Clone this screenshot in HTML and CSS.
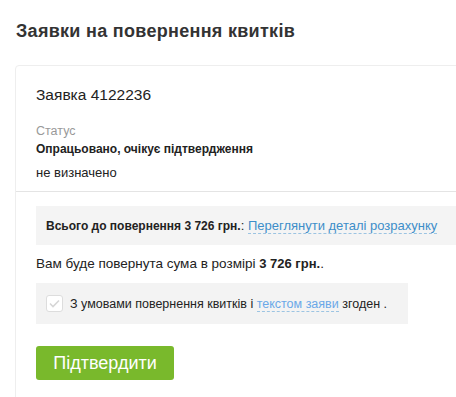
FILE: index.html
```html
<!DOCTYPE html>
<html lang="uk">
<head>
    <meta charset="UTF-8">
    <meta name="viewport" content="width=device-width, initial-scale=1.0">
    <title>Заявки на повернення квитків</title>
    <link rel="stylesheet" href="styles.css">
</head>
<body>
    <h1 class="pageTitle">Заявки на повернення квитків</h1>
    <div class="card">
        <div class="cardHead">
            <h2 class="orderTitle">Заявка 4122236</h2>
            <div class="statusLabel">Статус</div>
            <div class="statusValue">Опрацьовано, очікує підтвердження</div>
            <div class="statusNote">не визначено</div>
        </div>
        <div class="cardBody">
            <div class="totalBox">
                <b>Всього до повернення 3 726 грн.</b>: <a href="#" class="dashLink">Переглянути деталі розрахунку</a>
            </div>
            <p class="refundText">Вам буде повернута сума в розмірі <b>3 726 грн.</b>.</p>
            <label class="agreeBox">
                <span class="checkBox">
                    <svg width="11" height="9" viewBox="0 0 11 9"><path d="M1 4.5 L4 7.5 L10 1.5" fill="none" stroke="#d6d6d6" stroke-width="1.6"/></svg>
                </span>
                <span class="agreeText">З умовами повернення квитків і <a href="#" class="dashLink light">текстом заяви</a> згоден .</span>
            </label>
            <button class="confirmBtn">Підтвердити</button>
        </div>
    </div>
</body>
</html>
```

FILE: styles.css
```css
body {
    margin: 0;
    overflow: hidden;
    background-color: #fff;
    font-family: "Liberation Sans", Arial, sans-serif;
    color: #222;
}

.pageTitle {
    margin: 0;
    padding: 20px 16px 0 16px;
    font-size: 18px;
    line-height: 22px;
    letter-spacing: 0.3px;
    font-weight: bold;
    color: #333;
}

.card {
    margin: 23px -20px 0 15px;
    border: 1px solid #eeeeee;
    border-radius: 4px;
    min-height: 340px;
}

.cardHead {
    padding: 19px 20px 10px 20px;
    border-bottom: 1px solid #e4e4e4;
}

.orderTitle {
    margin: 0 0 18px 0;
    font-size: 15.5px;
    line-height: 20px;
    font-weight: normal;
    color: #222;
}

.statusLabel {
    font-size: 12.5px;
    line-height: 16px;
    color: #999;
}

.statusValue {
    margin-top: 2px;
    font-size: 12px;
    line-height: 16px;
    font-weight: bold;
}

.statusNote {
    margin-top: 8px;
    font-size: 13px;
    line-height: 16px;
}

.cardBody {
    padding: 14px 0 0 20px;
}

.totalBox {
    background-color: #f4f4f4;
    padding: 12px 10px 11px 10px;
    font-size: 13px;
    line-height: 16px;
}

.totalBox b {
    font-size: 12px;
}

.dashLink {
    color: #3d8ec9;
    text-decoration: none;
    border-bottom: 1px dashed #9cc4e2;
}

.dashLink.light {
    color: #6aa8e8;
}

.refundText {
    margin: 11px 0 11px 0;
    font-size: 13.5px;
    line-height: 16px;
}

.refundText b {
    font-size: 13px;
}

.agreeBox {
    display: flex;
    align-items: center;
    gap: 7px;
    width: 352px;
    padding: 12px 10px;
    background-color: #f3f3f3;
    font-size: 12.5px;
    line-height: 16px;
}

.agreeText {
    white-space: nowrap;
}

.checkBox {
    flex-shrink: 0;
    width: 15px;
    height: 15px;
    border: 1px solid #dddddd;
    border-radius: 3px;
    background-color: #fff;
    display: flex;
    align-items: center;
    justify-content: center;
}

.confirmBtn {
    margin-top: 22px;
    width: 138px;
    height: 34px;
    border: none;
    border-radius: 3px;
    background-color: #79b92c;
    color: #fff;
    font-family: "Liberation Sans", Arial, sans-serif;
    font-size: 18px;
    cursor: pointer;
}
```
